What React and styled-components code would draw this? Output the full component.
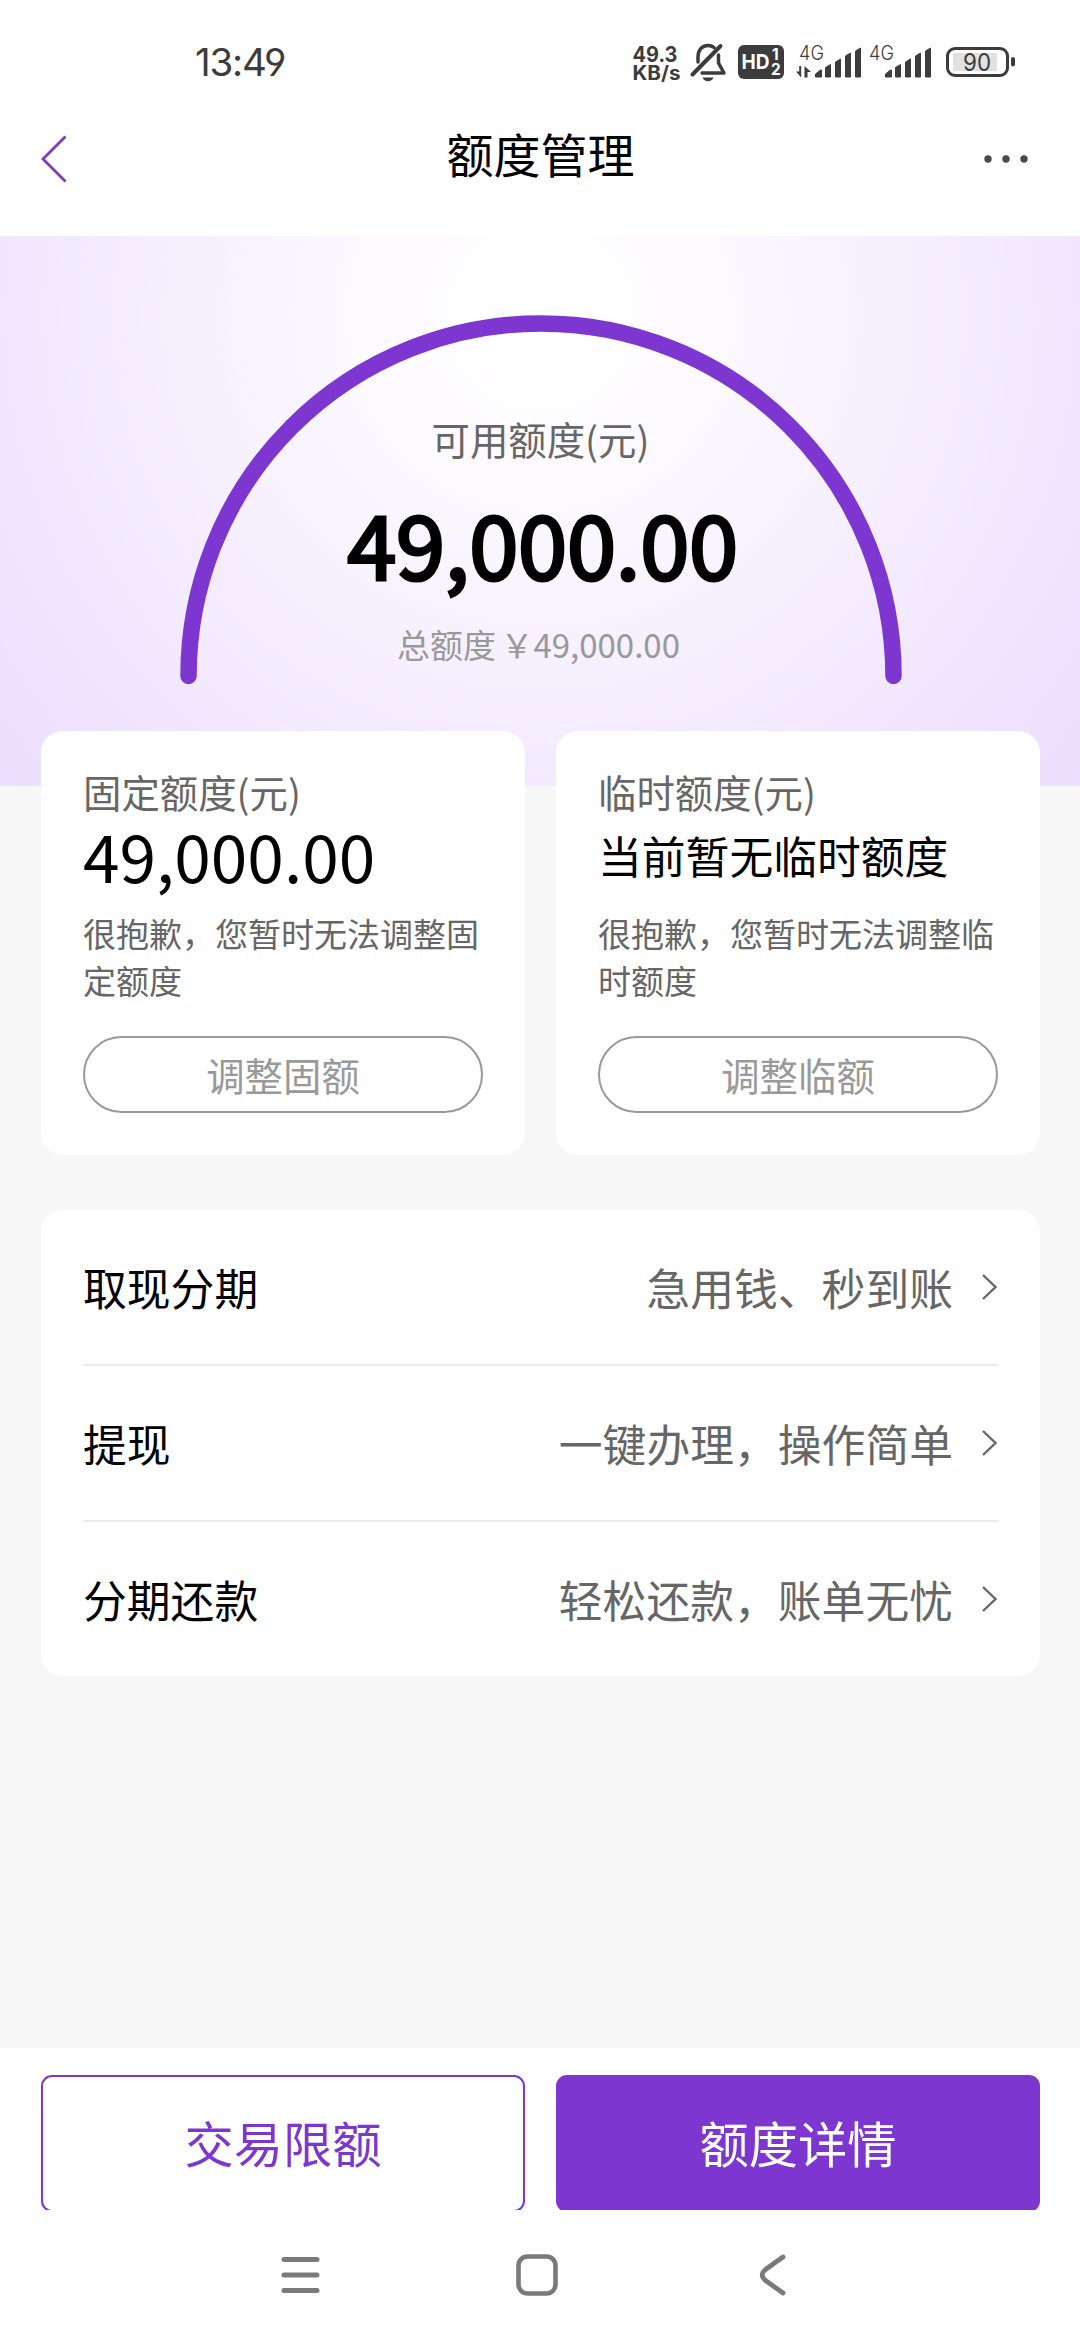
import React from 'react'
import styled, { createGlobalStyle } from 'styled-components'

const GlobalStyle = createGlobalStyle`
  * {
    box-sizing: border-box;
    margin: 0;
    padding: 0;
  }

  body {
    background: #f7f7f7;
    color: #000;
    font-family: 'Noto Sans CJK SC', 'Noto Sans', sans-serif;
  }

  button {
    font-family: inherit;
    background: none;
    border: none;
  }
`

const Page = styled.div`
  display: flex;
  flex-direction: column;
  width: 1080px;
  height: 2340px;
  overflow: hidden;
`

const StatusBar = styled.div`
  display: flex;
  justify-content: space-between;
  height: 84px;
  padding: 36px 64px 0 195px;
  background: #fff;
  color: #3c3c3c;
  font-family: Inter, sans-serif;
`

const Clock = styled.div`
  padding-top: 5px;
  font-size: 38.5px;
  line-height: 42px;
  letter-spacing: -1.2px;
  font-feature-settings: 'cv04';
`

const StatusIcons = styled.svg`
  width: 390px;
  height: 48px;
  overflow: visible;
`

const Header = styled.header`
  display: flex;
  align-items: center;
  justify-content: space-between;
  height: 152px;
  padding: 0 52px 2px 40px;
  background: #fff;

  h1 {
    font-size: 47px;
    font-weight: 400;
    line-height: 60px;
    padding: 0 0 12px 29px;
  }
`

const Hero = styled.section`
  position: relative;
  flex: none;
  display: flex;
  flex-direction: column;
  align-items: center;
  height: 550px;
  padding-top: 174px;
  background: radial-gradient(circle at 50% 80px, #ffffff 0, #fdfbff 140px, #f6effe 370px, #f0e6fe 550px, #ecdcfe 740px);
`

const Gauge = styled.svg`
  position: absolute;
  top: 78px;
  left: 179px;
`

const HeroLabel = styled.p`
  padding-left: 1px;
  color: #666;
  font-size: 38.4px;
  line-height: 56px;
`

const HeroAmount = styled.p`
  margin-top: 11px;
  padding-left: 5px;
  font-size: 88.4px;
  line-height: 128px;
  letter-spacing: -0.2px;
  -webkit-text-stroke: 3.2px #000;
`

const HeroTotal = styled.p`
  margin-top: 15px;
  padding-right: 3px;
  color: #999;
  font-size: 33px;
  line-height: 48px;
  word-spacing: -3px;
`

const Cards = styled.div`
  position: relative;
  display: grid;
  grid-template-columns: 1fr 1fr;
  gap: 31px;
  margin: -55px 40px 0 41px;
`

const Card = styled.div`
  height: 424px;
  padding: 32px 42px 0;
  border-radius: 22px;
  background: #fff;
`

const CardLabel = styled.p`
  color: #666;
  font-size: 38.4px;
  line-height: 56px;
`

const CardValue = styled.p`
  margin-top: 1px;
  font-size: ${({ $small }) => ($small ? '43.8px' : '65.8px')};
  line-height: 70px;
`

const CardNotice = styled.p`
  margin-top: 20px;
  color: #666;
  font-size: 33px;
  line-height: 47px;
`

const PillButton = styled.button`
  display: block;
  width: 100%;
  height: 77px;
  margin-top: 32px;
  padding-bottom: 2px;
  border: 2px solid #999;
  border-radius: 39px;
  color: #999;
  font-size: 38.4px;
  line-height: 70px;
`

const List = styled.ul`
  margin: 55px 40px 0 41px;
  padding: 0 42px;
  border-radius: 22px;
  background: #fff;
  list-style: none;
`

const ListRow = styled.li`
  display: flex;
  align-items: center;
  height: 156px;
  font-size: 43.8px;
  line-height: 64px;

  & + & {
    border-top: 2px solid #ebebeb;
  }

  &:first-child {
    height: 154px;
  }

  span {
    margin-left: auto;
    color: #666;
  }

  svg {
    margin-left: 28px;
  }
`

const Footer = styled.footer`
  margin-top: auto;
  background: #fff;
`

const Actions = styled.div`
  display: grid;
  grid-template-columns: 1fr 1fr;
  gap: 31px;
  height: 162px;
  padding: 27px 40px 0 41px;
  overflow: hidden;
`

const ActionButton = styled.button`
  height: 137px;
  padding-bottom: 5px;
  border: 2px solid #7d37d0;
  border-radius: 11px;
  background: ${({ $primary }) => ($primary ? '#7d37d0' : '#fff')};
  color: ${({ $primary }) => ($primary ? '#fff' : '#7d37d0')};
  font-size: 49.3px;
`

const NavBar = styled.nav`
  display: flex;
  align-items: center;
  gap: 194px;
  height: 130px;
  padding-left: 280px;

  svg:last-child {
    margin-left: 6px;
  }
`

const limits = [
  {
    label: '固定额度(元)',
    value: '49,000.00',
    notice: '很抱歉，您暂时无法调整固定额度',
    action: '调整固额',
  },
  {
    label: '临时额度(元)',
    value: '当前暂无临时额度',
    small: true,
    notice: '很抱歉，您暂时无法调整临时额度',
    action: '调整临额',
  },
]

const services = [
  { name: '取现分期', hint: '急用钱、秒到账' },
  { name: '提现', hint: '一键办理，操作简单' },
  { name: '分期还款', hint: '轻松还款，账单无忧' },
]

const Signal = ({ x }) => (
  <g transform={`translate(${x} 42)`}>
    <text x="0" y="18" fontSize="20" fontWeight="300" textLength="25" lengthAdjust="spacingAndGlyphs">4G</text>
    <path
      d="M16.5 35v-3l5-4h1v7zM26.5 35v-9.500l5-3V35zM36.5 35V20l5-3v18zM46.5 35V14l5-3v24zM56.5 35V9l5-3v29z"
      stroke="#3c3c3c"
      strokeLinejoin="round"
    />
  </g>
)

const StatusInfo = () => (
  <StatusIcons viewBox="626 36 390 48" fill="#3c3c3c">
    <text x="632.5" y="61.5" fontSize="21.5" fontWeight="700" textLength="45" lengthAdjust="spacingAndGlyphs">49.3</text>
    <text x="632.5" y="80" fontSize="19.5" fontWeight="700" textLength="48" lengthAdjust="spacingAndGlyphs">KB/s</text>

    {/* muted bell */}
    <g fill="none" stroke="#3c3c3c" strokeWidth="3.5" strokeLinecap="round" strokeLinejoin="round">
      <path d="M698 62V57c0-7 4-11.500 10-11.500 2.500 0 4.500.7 6 2" />
      <path d="M718.5 55v8l5.500 10H702" />
      <path d="M692.5 74.500L720.5 46" strokeWidth="4" />
    </g>
    <path d="M702.5 77.500h11c-1 2.500-3 3.700-5.500 3.700s-4.500-1.200-5.500-3.700z" />

    <rect x="738" y="45" width="46" height="34" rx="6" />
    <g fill="#fff" fontWeight="700">
      <text x="741.5" y="69" fontSize="20.5" textLength="28" lengthAdjust="spacingAndGlyphs">HD</text>
      <text x="772" y="60" fontSize="15.5">1</text>
      <text x="771" y="75" fontSize="15.5">2</text>
    </g>

    <Signal x={799} />
    <path d="M796 71.500h3.200V66h2v11.500zM804.5 77.500V66l6.500 6h-3.500v5.500z" />
    <Signal x={869} />

    <rect x="953" y="53" width="44" height="18" fill="#e1e1e1" />
    <rect x="947.5" y="48.5" width="60" height="27" rx="7.5" fill="none" stroke="#3c3c3c" strokeWidth="3" />
    <rect x="1011" y="57" width="4" height="9.5" rx="2" />
    <text x="963" y="71" fontSize="24" textLength="28" lengthAdjust="spacingAndGlyphs">90</text>
  </StatusIcons>
)

const App = () => {
  return (
    <Page>
      <GlobalStyle />
      <StatusBar>
        <Clock>13:49</Clock>
        <StatusInfo />
      </StatusBar>

      <Header>
        <svg width="28" height="48" fill="none" stroke="#7d3cb4" strokeWidth="2.8">
          <path d="M25.5 1.500L3 24l22.500 22.500" />
        </svg>
        <h1>额度管理</h1>
        <svg width="44" height="8" fill="#4a4a4a">
          <circle cx="4" cy="4" r="3.7" />
          <circle cx="22" cy="4" r="3.7" />
          <circle cx="40" cy="4" r="3.7" />
        </svg>
      </Header>

      <Hero>
        <Gauge width="724" height="374" fill="none" stroke="#7d37d0" strokeWidth="16.5" strokeLinecap="round">
          <path d="M9.5 362a352.500 352.500 0 0 1 705 0" />
        </Gauge>
        <HeroLabel>可用额度(元)</HeroLabel>
        <HeroAmount>49,000.00</HeroAmount>
        <HeroTotal>总额度 ￥49,000.00</HeroTotal>
      </Hero>

      <Cards>
        {limits.map((item) => (
          <Card key={item.label}>
            <CardLabel>{item.label}</CardLabel>
            <CardValue $small={item.small}>{item.value}</CardValue>
            <CardNotice>{item.notice}</CardNotice>
            <PillButton>{item.action}</PillButton>
          </Card>
        ))}
      </Cards>

      <List>
        {services.map((item) => (
          <ListRow key={item.name}>
            {item.name}
            <span>{item.hint}</span>
            <svg width="17" height="28" fill="none" stroke="#666" strokeWidth="2.4">
              <path d="M2 2l12.500 12L2 26" />
            </svg>
          </ListRow>
        ))}
      </List>

      <Footer>
        <Actions>
          <ActionButton>交易限额</ActionButton>
          <ActionButton $primary>额度详情</ActionButton>
        </Actions>
        <NavBar>
          <svg width="42" height="42" stroke="#7a7a7a" strokeWidth="5" strokeLinecap="round">
            <path d="M4 5.500h33M4 21h33M4 36.500h33" />
          </svg>
          <svg width="42" height="42" fill="none" stroke="#7a7a7a" strokeWidth="4.6">
            <rect x="2.5" y="2.5" width="37" height="37" rx="9" />
          </svg>
          <svg width="28" height="44" fill="none" stroke="#7a7a7a" strokeWidth="4.8" strokeLinecap="round">
            <path d="M25 4L7.5 16.500q-6.500 5.500 0 11L25 40" />
          </svg>
        </NavBar>
      </Footer>
    </Page>
  )
}

export default App
